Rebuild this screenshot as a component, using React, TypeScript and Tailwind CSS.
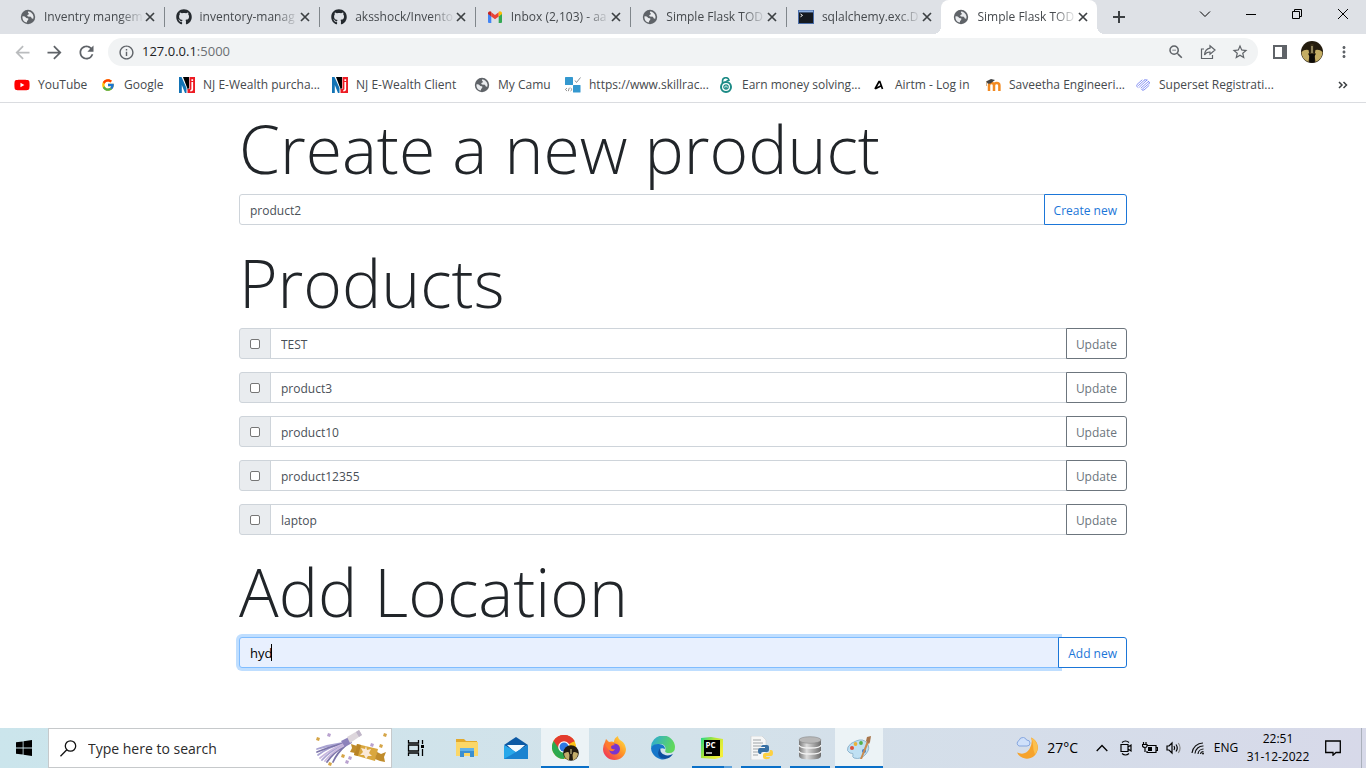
import React from "react";
import type { ReactNode } from "react";
import { FaGithub, FaYoutube } from "react-icons/fa";
import { FcGoogle } from "react-icons/fc";
import {
  MdArrowBack,
  MdArrowForward,
  MdInfoOutline,
  MdMoreVert,
  MdRefresh,
  MdStarBorder,
  MdZoomOut,
} from "react-icons/md";

/* ---------- Favicons ---------- */

const Globe = () => (
  <svg viewBox="0 0 16 16" className="size-4">
    <circle cx="8" cy="8" r="7.200" fill="#5f6368" />
    <path
      d="M2.300 7.400Q4.600 6.900 5.600 8.300q.5 1.200 2.200 1 1.100.3.300 1.600-1.400.8-1.200 2.700Q2.400 12.600 2.300 7.400zM8.600 2.300q-1.300 1-.4 1.800 1.200.2.400 1.300-1.700.2-1.300 1.500.9.900 2.600.7 1.600.1 1.700 1.700.9.700 1.800.3Q14.400 4.600 8.600 2.300z"
      fill="#e9ebee"
    />
  </svg>
);

const Gmail = () => (
  <svg viewBox="0 0 16 16" className="size-4">
    <path d="M1 4.500V13a1 1 0 0 0 1 1h2.300V7z" fill="#4285f4" />
    <path d="M15 4.500V13a1 1 0 0 1-1 1h-2.300V7z" fill="#34a853" />
    <path d="M4.300 7.400V3.200L8 6l3.700-2.800v4.200L8 10.200z" fill="#ea4335" />
    <path d="M1 4.600V4a2 2 0 0 1 3.300-1.200v4.600L1 5z" fill="#c5221f" />
    <path d="M15 4.600V4a2 2 0 0 0-3.300-1.200v4.600L15 5z" fill="#fbbc04" />
  </svg>
);

const Terminal = () => (
  <svg viewBox="0 0 16 16" className="size-4">
    <rect y="1" width="16" height="14" fill="#4a6da8" />
    <rect x="1" y="1.500" width="14" height="2" fill="#8fb0e0" />
    <rect x="1" y="3.500" width="14" height="10.500" fill="#15191f" />
    <path d="M2.500 5l2 1.400-2 1.400" stroke="#fff" fill="none" />
  </svg>
);

const Nj = () => (
  <svg viewBox="0 0 16 16" className="size-4">
    <rect width="16" height="16" fill="#fff" />
    <path d="M0 0h2.500l5 11V16H6L2.800 8v8H0z" fill="#1273b5" />
    <path d="M4 0h6v10.500L9 13z" fill="#000" />
    <path d="M10.500 0H16v16H8.500v-4h2z" fill="#ed1c24" />
    <path d="M12.400 2.200h1.700v1.700h-1.700zM12.400 5h1.700v7.500q0 1.900-2.800 1.900V13q1.100 0 1.100-1z" fill="#fff" />
  </svg>
);

const SkillRack = () => (
  <svg viewBox="0 0 16 16" className="size-4">
    <rect width="8" height="8" rx=".6" fill="#3498cf" />
    <rect x="8" y="8" width="7.500" height="7.500" rx=".6" fill="#3498cf" />
    <path d="M10 3.500l1.500 2L15.500 .5" stroke="#8a8f94" fill="none" />
    <path d="M2 11L.4 12.500 2 14M5.500 11l1.600 1.500L5.500 14M4.300 10.800l-1 3.400" stroke="#777" fill="none" strokeWidth=".8" />
  </svg>
);

const Lock = () => (
  <svg viewBox="0 0 16 16" className="size-4" fill="none" stroke="#1b8a85">
    <circle cx="8" cy="10" r="5" strokeWidth="2" />
    <circle cx="8" cy="10" r="2.200" strokeWidth="1.200" />
    <path d="M8 9.500V12M4.500 6V4a3.300 3.300 0 0 1 6.500-.8L8.500 4" strokeWidth="1.600" />
  </svg>
);

const Airtm = () => (
  <svg viewBox="0 0 16 16" className="size-4" fill="none" stroke="#000" strokeWidth="1.700">
    <path d="M4 12L8 4.500h.8l2.700 7.500M4.300 11.800L9.800 9" />
  </svg>
);

const Moodle = () => (
  <svg viewBox="0 0 16 16" className="size-4">
    <path d="M4 14V8.500Q4 6 6.500 6T9 8.500V14M9 8.500Q9 6 11.700 6t2.700 2.500V14" stroke="#f28a22" strokeWidth="2.500" fill="none" />
    <path d="M1 4.500L6 2l4 1-4.500 3.500L3 6.800z" fill="#444" />
    <path d="M1.500 4.500V9" stroke="#bb9566" strokeWidth=".7" />
  </svg>
);

const Superset = () => (
  <svg viewBox="0 0 16 16" className="size-4" fill="none" stroke="#6c7af0" strokeWidth=".8" strokeLinecap="round">
    <path d="M7 3L2 7.500a2 2 0 0 0 1 3M9.500 3L3.500 8.500M12 3L4.500 10M13.500 4.500L6 11M14.500 6L7.500 12M14 8.500L9 13a2 2 0 0 1-2.500-.5M9.500 3Q10.500 2.200 12 3M13.500 4.500q1.500.5 1 1.500" />
  </svg>
);

/* ---------- Browser frame ---------- */

type Tab = { title: string; icon: ReactNode; active?: boolean };

const tabs: Tab[] = [
  { title: "Inventry mangem", icon: <Globe /> },
  { title: "inventory-manag", icon: <FaGithub className="size-4 text-[#24292e]" /> },
  { title: "aksshock/Invento", icon: <FaGithub className="size-4 text-[#24292e]" /> },
  { title: "Inbox (2,103) - aa", icon: <Gmail /> },
  { title: "Simple Flask TOD", icon: <Globe /> },
  { title: "sqlalchemy.exc.D", icon: <Terminal /> },
  { title: "Simple Flask TOD", icon: <Globe />, active: true },
];

function TabStrip() {
  return (
    <div className="flex h-[34px] bg-[#dee1e6] pl-2 text-[#45494d]">
      <div className="flex min-w-0 flex-[0_1_1089px]">
        {tabs.map((tab, i) => (
          <div
            key={i}
            className={
              tab.active
                ? "relative flex min-w-0 flex-1 items-center rounded-t-lg bg-white pr-2 pl-3"
                : "relative flex min-w-0 flex-1 items-center pr-2 pl-3"
            }
          >
            {tab.active && (
              <>
                <span className="absolute bottom-0 -left-2 size-2 bg-[radial-gradient(circle_at_0_0,transparent_8px,white_8px)]" />
                <span className="absolute -right-2 bottom-0 size-2 bg-[radial-gradient(circle_at_100%_0,transparent_8px,white_8px)]" />
              </>
            )}
            <span className="flex w-4 shrink-0 justify-center">{tab.icon}</span>
            <a
              href="#"
              className="ml-2 min-w-0 flex-1 whitespace-nowrap [mask-image:linear-gradient(to_right,black_76%,transparent)]"
            >
              {tab.title}
            </a>
            <button aria-label="Close tab" className="flex w-3 shrink-0 items-center justify-center">
              <svg viewBox="0 0 10 10" className="size-[10px]">
                <path d="M1 1l8 8M9 1L1 9" stroke="#3c4043" strokeWidth="1.700" />
              </svg>
            </button>
            {i < 5 && <span className="absolute top-[7px] -right-px h-5 w-px bg-[#80868b]" />}
          </div>
        ))}
      </div>
      <button aria-label="New tab" className="ml-3 flex w-5 shrink-0 items-center justify-center">
        <svg viewBox="0 0 12 12" className="size-3">
          <path d="M6 0v12M0 6h12" stroke="#3c4043" strokeWidth="2" />
        </svg>
      </button>
      <div className="ml-auto flex h-7 shrink-0 text-black">
        {[
          ["Search tabs", "M1 3.500l5 5 5-5"],
          ["Minimize", "M1 6.500h10"],
          ["Restore", "M1.500 3.500h7v7h-7zM3.500 3.500v-2h7v7h-2"],
          ["Close", "M1 1l10 10M11 1L1 11"],
        ].map(([label, d]) => (
          <button key={label} aria-label={label} className="flex w-[46px] items-center justify-center">
            <svg viewBox="0 0 12 12" className="size-3" fill="none" stroke="currentColor">
              <path d={d} />
            </svg>
          </button>
        ))}
      </div>
    </div>
  );
}

const slot = "flex w-8 shrink-0 items-center justify-center";

function Toolbar() {
  return (
    <div className="flex h-9 items-center bg-white px-[6px] text-[#5f6368]">
      <button aria-label="Back" className={slot}>
        <MdArrowBack className="size-[21px] text-[#babcbe]" />
      </button>
      <button aria-label="Forward" className={slot}>
        <MdArrowForward className="size-[21px]" />
      </button>
      <button aria-label="Reload" className={slot}>
        <MdRefresh className="size-[21px]" />
      </button>
      <div className="ml-[6px] flex h-7 min-w-0 flex-1 items-center rounded-full bg-[#f1f3f4] px-[2px]">
        <button aria-label="View site information" className={slot}>
          <MdInfoOutline className="size-[17px]" />
        </button>
        <div role="textbox" aria-label="Address" className="flex-1 text-[13px] text-[#6b6f73]">
          <span className="text-[#202124]">127.0.0.1</span>:5000
        </div>
        <button aria-label="Zoom" className={slot}>
          <MdZoomOut className="size-[18px]" />
        </button>
        <button aria-label="Share" className={slot}>
          <svg viewBox="0 0 16 16" className="size-4" fill="none" stroke="currentColor" strokeWidth="1.200">
            <path d="M4 5H1.500v9.500h11V11" />
            <path d="M10 1.800l5 4.200-5 4.200V8Q6.500 7.800 4.500 11 5 5 10 4.200z" />
          </svg>
        </button>
        <button aria-label="Bookmark" className={slot}>
          <MdStarBorder className="size-[18px]" />
        </button>
      </div>
      <button aria-label="Side panel" className="ml-[6px] flex w-8 shrink-0 items-center justify-center">
        <svg viewBox="0 0 14 14" className="size-[14px]">
          <path d="M1 1h12v12H1z" fill="none" stroke="currentColor" strokeWidth="2" />
          <path d="M9 1h4v12H9z" fill="currentColor" />
        </svg>
      </button>
      <button aria-label="Profile" className={slot}>
        <svg viewBox="0 0 22 22" className="size-[22px]">
          <circle cx="11" cy="11" r="11" fill="#241c0e" />
          <path d="M.5 11q3-3 7-2l1 5-1 7A11 11 0 0 1 .5 11zM21.500 11q-3-3-7-2l-1 5 1 7a11 11 0 0 0 7-10z" fill="#c4ad63" />
          <path d="M7 12.500h8l-1.500 3v6h-5v-6z" fill="#0b0906" />
          <path d="M9.500 3h3v7l1 3h-5l1-3z" fill="#3a2f18" />
          <path d="M10.500 5h1v7h-1z" fill="#e6d9a0" />
        </svg>
      </button>
      <button aria-label="Menu" className={slot}>
        <MdMoreVert className="size-[18px]" />
      </button>
    </div>
  );
}

const bookmarks: { label: string; icon: ReactNode; width: string }[] = [
  { label: "YouTube", icon: <FaYoutube className="size-4 text-[#f00]" />, width: "w-[86px]" },
  { label: "Google", icon: <FcGoogle className="size-[14px]" />, width: "w-[79px]" },
  { label: "NJ E-Wealth purcha...", icon: <Nj />, width: "w-[153px]" },
  { label: "NJ E-Wealth Client", icon: <Nj />, width: "w-[142px]" },
  { label: "My Camu", icon: <Globe />, width: "w-[91px]" },
  { label: "https://www.skillrac...", icon: <SkillRack />, width: "w-[153px]" },
  { label: "Earn money solving...", icon: <Lock />, width: "w-[153px]" },
  { label: "Airtm - Log in", icon: <Airtm />, width: "w-[114px]" },
  { label: "Saveetha Engineeri...", icon: <Moodle />, width: "w-[150px]" },
  { label: "Superset Registrati...", icon: <Superset />, width: "w-[140px]" },
];

function BookmarksBar() {
  return (
    <nav className="flex h-[33px] items-center border-b border-[#dadce0] bg-white pr-[18px] pb-[3px] pl-[14px] text-[#45494d]">
      {bookmarks.map((b) => (
        <a key={b.label} href="#" className={`${b.width} flex items-center gap-2 whitespace-nowrap`}>
          <span className="flex w-4 shrink-0 justify-center">{b.icon}</span>
          {b.label}
        </a>
      ))}
      <button aria-label="More bookmarks" className="ml-auto">
        <svg viewBox="0 0 10 8" className="h-2 w-[10px]" fill="none" stroke="#3c4043" strokeWidth="1.500">
          <path d="M1 1l3 3-3 3M5.500 1l3 3-3 3" />
        </svg>
      </button>
    </nav>
  );
}

/* ---------- Page ---------- */

const heading = "mb-[2px] text-[66px] leading-[88px] font-light whitespace-nowrap text-[#212529]";
const field = "min-w-0 flex-1 border border-[#ced4da] bg-white px-[10px] pt-[2px] text-[#495057] outline-none";
const action = "-ml-px rounded-r-[3px] border bg-white px-[9px] pt-[2px]";

function ProductRow({ name }: { name: string }) {
  return (
    <form className="flex h-[31px]" onSubmit={(e) => e.preventDefault()}>
      <label className="flex w-8 shrink-0 items-center justify-center rounded-l-[3px] border border-[#ced4da] bg-[#e9ecef]">
        <input
          type="checkbox"
          aria-label={`Select ${name}`}
          className="size-[10px] appearance-none rounded-[2px] border border-[#767676] bg-white checked:bg-[#1b76d8]"
        />
      </label>
      <input type="text" aria-label="Product name" defaultValue={name} className={`${field} -ml-px`} />
      <button type="submit" className={`${action} border-[#6c757d] text-[#6c757d]`}>
        Update
      </button>
    </form>
  );
}

function InventoryPage() {
  return (
    <main className="flex-1 bg-white px-4 pt-px">
      <div className="mx-auto max-w-[888px]">
        <h1 className={heading}>Create a new product</h1>
        <form className="mb-[13px] flex h-[31px]" onSubmit={(e) => e.preventDefault()}>
          <input type="text" aria-label="New product" defaultValue="product2" className={`${field} rounded-l-[3px]`} />
          <button type="submit" className={`${action} border-[#1b76d8] text-[#1b76d8]`}>
            Create new
          </button>
        </form>

        <h1 className={heading}>Products</h1>
        <div className="mb-3 flex flex-col gap-[13px]">
          {["TEST", "product3", "product10", "product12355", "laptop"].map((name) => (
            <ProductRow key={name} name={name} />
          ))}
        </div>

        <h1 className={heading}>Add Location</h1>
        <form className="flex h-[31px]" onSubmit={(e) => e.preventDefault()}>
          <div className="relative flex min-w-0 flex-1">
            <input
              type="text"
              aria-label="New location"
              defaultValue="hyd"
              className="min-w-0 flex-1 rounded-l-[3px] border border-[#80bdff] bg-[#e8f0fe] px-[10px] pt-[2px] text-[13px] text-black caret-transparent shadow-[0_0_0_3px_#bfdeff] outline-none"
            />
            <span className="absolute top-[7px] left-8 h-[17px] w-px bg-black" />
          </div>
          <button type="submit" className={`${action} relative border-[#1b76d8] text-[#1b76d8]`}>
            Add new
          </button>
        </form>
      </div>
    </main>
  );
}

/* ---------- Taskbar ---------- */

const Confetti = () => (
  <svg viewBox="0 0 76 38" className="h-[38px] w-[76px] shrink-0">
    <g fill="none" strokeLinecap="round" strokeWidth="1.800">
      <path d="M28 14Q14 16 2 20M28 14Q12 19 3 26M29 15Q15 22 7 31" stroke="#a9a3d2" />
      <path d="M29 14Q14 18 2 23M30 16Q18 24 12 33M31 16Q22 24 18 33" stroke="#7b74a8" />
      <path d="M28 15Q16 20 5 29M30 16Q18 22 10 32" stroke="#c9b8dd" />
    </g>
    <path d="M26 12l8-4 3 6-7 4z" fill="#8d82bb" />
    <path d="M32 8L44 1l3 5-12 8z" fill="#ddd6dc" />
    <path d="M41 3l3-2 3 5-3 2z" fill="#c0b6c9" />
    <path d="M42 15l21 5-3 12-21-6z" fill="#d9a73e" />
    <path d="M42 15l4 1-3 11-4-1z" fill="#b98425" />
    <path d="M42 17l-6-2 1 4-2 4 5 1zM62 23l4 2 5-2-2 5 1 5-5-1-5-2z" fill="#c08c2b" />
    <path d="M51 17l1 4 4-1-2 4 3 3-4 0-2 3-2-4-4 0 3-3-2-4 4 1z" fill="#fbe9d8" />
    <g fill="#d5a547">
      <path d="M2 8l3 1-1 3-3-1zM69 4l3 1-1 3-3-1zM65 15l3 1-1 3-3-1zM14 33l3 1-1 3-3-1zM27 25l3 1-1 3-3-1z" />
    </g>
    <g fill="#b9a2cf">
      <path d="M13 4l3 1-1 3-3-1zM56 14l3 1-1 3-3-1zM34 27l3 1-1 3-3-1zM31 31l3 1-1 3-3-1z" />
    </g>
  </svg>
);

const TaskView = () => (
  <svg viewBox="0 0 18 16" className="h-4 w-[18px]" fill="none" stroke="#000" strokeWidth="1.300">
    <path d="M1.500 0v3h10V0M1.500 16v-3h10v3M1.500 5h10v6h-10zM15.500 0v4M15.500 9v7" />
    <path d="M14 5h3v3h-3z" fill="#000" stroke="none" />
  </svg>
);

const Folder = () => (
  <svg viewBox="0 0 24 24" className="size-6">
    <path d="M1 3h8l2 2h11v15H1z" fill="#e3a92b" />
    <path d="M1 6h22v14H1z" fill="#fbd768" />
    <path d="M5 12h14v9h-4v-4H9v4H5z" fill="#3b8fd0" />
    <path d="M5 12h14v3H5z" fill="#62b2e8" />
  </svg>
);

const Mail = () => (
  <svg viewBox="0 0 24 24" className="size-6">
    <path d="M0 9L12 1l12 8-12 8z" fill="#0c59a4" />
    <path d="M3 9h18l-9 8z" fill="#f4fafe" />
    <path d="M0 9l12 7 12-7v14H0z" fill="#28a8ea" />
    <path d="M0 23L24 9v14z" fill="#1a83d0" />
  </svg>
);

const Chrome = () => (
  <svg viewBox="0 0 27 26" className="h-[26px] w-[27px]">
    <circle cx="12" cy="12" r="12" fill="#fbc116" />
    <path d="M12 12L1.600 6A12 12 0 0 1 22.400 6z" fill="#e33b2e" />
    <path d="M1.600 6A12 12 0 0 0 12 24l5-9-5-3z" fill="#2da94f" />
    <path d="M12 6.500h10.700L22.400 6A12 12 0 0 0 1.600 6l5.600 8z" fill="#e33b2e" />
    <circle cx="12" cy="12" r="5.800" fill="#fff" />
    <circle cx="12" cy="12" r="4.500" fill="#2f78e4" />
    <circle cx="19" cy="18" r="7.800" fill="#211a10" />
    <path d="M12 18.500q2-2 4.500-1.500l1 3-.5 5.300a7.800 7.800 0 0 1-5-6.800zM26 18.500q-2-2-4.500-1.500l-1 3 .5 5.300a7.800 7.800 0 0 0 5-6.800z" fill="#c3ad6b" />
    <path d="M18.500 14h1v5h-1z" fill="#e6d9a0" />
  </svg>
);

const Firefox = () => (
  <svg viewBox="0 0 24 24" className="size-6">
    <defs>
      <linearGradient id="fx" x1="1" y1="0" x2="0" y2="1">
        <stop offset="0" stopColor="#fff04a" />
        <stop offset=".45" stopColor="#ff9326" />
        <stop offset="1" stopColor="#ed1c64" />
      </linearGradient>
    </defs>
    <path d="M3 6l1-3 3 3q3-1 5 0 0-4 4-6 0 3 3.500 5T24 13a11.500 11 0 0 1-23 0Q1 9 3 6z" fill="url(#fx)" />
    <circle cx="12.500" cy="13" r="5.500" fill="#7a35cf" />
    <path d="M3 8q6-3 10 1-4 0-4 2 0 3 4 2-2 4-6 1-3-3-4-6z" fill="#ff7a2d" />
  </svg>
);

const Edge = () => (
  <svg viewBox="0 0 24 24" className="size-6">
    <defs>
      <linearGradient id="edgeTop" x1="0" y1="0" x2="1" y2=".3">
        <stop offset="0" stopColor="#2aa7dc" />
        <stop offset="1" stopColor="#5fd85c" />
      </linearGradient>
    </defs>
    <path d="M0 12A12 12 0 0 1 24 11q0 6-6 6-5 0-3.500-3Q15 8 9 8 3 8 0 12z" fill="url(#edgeTop)" />
    <path d="M0 12Q2 7.500 8 8q6 .5 6 5-4-2-6 1-1 8 7 9A12 12 0 0 1 0 12z" fill="#1676c9" />
    <path d="M8.500 12.500Q5 19 10 22q7 3 12-4-5 2.500-9 .500t-3.500-5z" fill="#0c4f9f" />
  </svg>
);

const PyCharm = () => (
  <svg viewBox="0 0 22 22" className="size-[22px]">
    <defs>
      <linearGradient id="pc" x1="0" y1="0" x2="1" y2=".6">
        <stop offset="0" stopColor="#21d789" />
        <stop offset=".5" stopColor="#b5e636" />
        <stop offset="1" stopColor="#f3ef3a" />
      </linearGradient>
    </defs>
    <path d="M0 1l10-1 12 2v18l-8 2-14-1z" fill="url(#pc)" />
    <rect x="3" y="3" width="16" height="16" fill="#000" />
    <text x="4.500" y="11" fontSize="8" fontWeight="700" fill="#fff">PC</text>
    <path d="M5 16h6" stroke="#fff" strokeWidth="1.300" />
  </svg>
);

const PythonFile = () => (
  <svg viewBox="0 0 24 24" className="size-6">
    <path d="M2 0h11l4 4v20H2z" fill="#f6f7f7" stroke="#c8cbcd" strokeWidth=".6" />
    <path d="M4 4h8M4 7h10M4 10h8M4 13h6M4 16h6M4 19h5" stroke="#9ea3a6" />
    <path d="M14 9h4q2 0 2 2v3q0 2-2 2h-4q-2 0-2 2h-1q-2 0-2-3t2-3h5v-1h-4q0-2 2-2z" fill="#3770a4" />
    <path d="M19 23h-3q-2 0-2-2v-2q0-2 2-2h3q2 0 2-3h1q2 0 2 3t-2 3h-5v1h4q0 2-2 2z" fill="#fdd143" />
  </svg>
);

const Database = () => (
  <svg viewBox="0 0 24 24" className="size-6">
    <defs>
      <linearGradient id="db">
        <stop offset="0" stopColor="#777" />
        <stop offset=".35" stopColor="#ddd" />
        <stop offset="1" stopColor="#6c6c6c" />
      </linearGradient>
    </defs>
    <path d="M1 4v16q0 3.500 11 3.500T23 20V4z" fill="url(#db)" />
    <path d="M1 9q0 3 11 3t11-3M1 15q0 3 11 3t11-3" stroke="#f3f3f3" strokeWidth="1.300" fill="none" />
    <ellipse cx="12" cy="4" rx="11" ry="3.300" fill="#b7b7b7" stroke="#888" strokeWidth=".6" />
  </svg>
);

const Paint = () => (
  <svg viewBox="0 0 24 24" className="size-6">
    <path d="M9 5q7-3 11 2t-1 11-12 4q-2-1-1-3t-3-2Q-1 15 1 11q2-4 8-6z" fill="#bfe0f3" stroke="#7fa8c4" strokeWidth=".8" />
    <circle cx="5" cy="12" r="2" fill="#e0503c" />
    <circle cx="8.500" cy="8" r="1.900" fill="#e9b23a" />
    <circle cx="14" cy="7" r="1.900" fill="#54b04c" />
    <circle cx="17" cy="15" r="2" fill="#3c78c8" />
    <path d="M13 23L20 5l2 1-7 17z" fill="#c98b4f" />
    <path d="M19 5l1-4 4-1-1 6-1 2z" fill="#a8764c" />
  </svg>
);

const apps: { name: string; icon: ReactNode; state: "idle" | "open" | "stacked" | "current" }[] = [
  { name: "File Explorer", icon: <Folder />, state: "idle" },
  { name: "Mail", icon: <Mail />, state: "idle" },
  { name: "Chrome", icon: <Chrome />, state: "current" },
  { name: "Firefox", icon: <Firefox />, state: "idle" },
  { name: "Edge", icon: <Edge />, state: "idle" },
  { name: "PyCharm", icon: <PyCharm />, state: "stacked" },
  { name: "Python", icon: <PythonFile />, state: "open" },
  { name: "Database", icon: <Database />, state: "open" },
  { name: "Paint", icon: <Paint />, state: "current" },
];

const Moon = () => (
  <svg viewBox="0 0 24 24" className="size-6">
    <path d="M16 1.500A11 11 0 1 1 2 16.500Q10 20 14.500 13 18 7 16 1.500z" fill="#f6a32c" />
    <path d="M16 1.500a11 11 0 0 1 4 17Q18 14 18 9q0-4-2-7.500z" fill="#fbc04f" />
    <path d="M4 10a3 3 0 0 1 0-5.500Q5 1 8.500 1.500 11 2 11.500 4 15 4 15 7t-3 3z" fill="#cfe0fa" stroke="#7d9fdc" strokeWidth=".9" />
  </svg>
);

const tray = "flex w-6 shrink-0 items-center justify-center";

function Taskbar() {
  return (
    <footer className="flex h-10 bg-linear-to-r from-[#cbe5ec] via-[#d3e2ea] to-[#d7d9e9] text-black">
      <button aria-label="Start" className="flex w-12 shrink-0 items-center justify-center">
        <svg viewBox="0 0 16 16" className="size-4">
          <path d="M0 2.300L6.700 1.400V7.600H0zM7.500 1.300L16 0v7.600H7.500zM0 8.400h6.700v6.200L0 13.700zM7.500 8.400H16V16l-8.500-1.300z" />
        </svg>
      </button>
      <label className="flex w-[344px] shrink-0 items-center border border-[#c6c9cb] bg-white pl-[11px]">
        <svg viewBox="0 0 17 17" className="size-[17px] shrink-0" fill="none" stroke="#111" strokeWidth="1.300">
          <circle cx="10.500" cy="6" r="5.200" />
          <path d="M6.800 9.800L.5 16.300" />
        </svg>
        <input
          type="text"
          aria-label="Search"
          placeholder="Type here to search"
          className="ml-[11px] min-w-0 flex-1 pt-[2px] text-sm outline-none placeholder:text-[#2b2b2b]"
        />
        <Confetti />
      </label>
      <button aria-label="Task view" className="mr-[3px] flex w-12 shrink-0 items-center justify-center">
        <TaskView />
      </button>
      <div className="flex gap-px">
        {apps.map((app) => (
          <button
            key={app.name}
            aria-label={app.name}
            className={
              app.state === "current"
                ? "relative flex w-12 items-center justify-center bg-[#ecf3f6]"
                : "relative flex w-12 items-center justify-center"
            }
          >
            {app.icon}
            {app.state === "current" && <span className="absolute inset-x-0 bottom-0 h-[2px] bg-[#0a70c8]" />}
            {app.state === "open" && <span className="absolute inset-x-1 bottom-0 h-[2px] bg-[#0a70c8]" />}
            {app.state === "stacked" && (
              <span className="absolute inset-x-1 bottom-0 h-[2px] border-r-8 border-[#5fa3dc] bg-[#0a70c8]" />
            )}
          </button>
        ))}
      </div>

      <div className="ml-auto flex shrink-0 items-center">
        <button className="mr-3 flex items-center gap-2 text-sm">
          <Moon />
          27°C
        </button>
        <button aria-label="Hidden icons" className={tray}>
          <svg viewBox="0 0 12 8" className="h-2 w-3" fill="none" stroke="#000" strokeWidth="1.300">
            <path d="M.7 7L6 1.500 11.300 7" />
          </svg>
        </button>
        <button aria-label="Meet now" className={tray}>
          <svg viewBox="0 0 12 16" className="h-4 w-3" fill="none" stroke="#000" strokeWidth="1.200">
            <path d="M2 2.500Q5.500-.5 9 2.500M2 13.500q3.500 3 7 0M1 4.500h7v7H1zM8 7l3-2v6L8 9" />
          </svg>
        </button>
        <button aria-label="Battery" className={tray}>
          <svg viewBox="0 0 16 12" className="h-3 w-4" fill="none" stroke="#000" strokeWidth="1.200">
            <path d="M5.500 3.500H14v7H5V9M14 5.500h1.500v3H14M1.500 0v2.500M4 0v2.500M.5 2.500H5V4Q5 5.500 3 5.500T.5 4zM3 5.500V10" />
            <path d="M6 5h4v4H6z" fill="#000" stroke="none" />
          </svg>
        </button>
        <button aria-label="Volume" className={tray}>
          <svg viewBox="0 0 16 14" className="h-[14px] w-4" fill="none" stroke="#000" strokeWidth="1.200">
            <path d="M1 5h2l3-3v10L3 9H1zM8 5q1.300 2 0 4M10 3.500q2.500 3.500 0 7" />
            <path d="M12.300 2q3.500 5 0 10" stroke="#888" />
          </svg>
        </button>
        <button aria-label="Network" className={tray}>
          <svg viewBox="0 0 14 14" className="size-[14px]" fill="none" stroke="#111" strokeWidth="1.200">
            <path d="M1 12A11 11 0 0 1 12 2M4 12.500A8 8 0 0 1 12.500 5M7 13a5.500 5.500 0 0 1 5.500-5M9.500 13a3 3 0 0 1 3-2.500" />
            <circle cx="12" cy="12.500" r="1" fill="#111" stroke="none" />
          </svg>
        </button>
        <button aria-label="Input language" className="w-8 text-center">ENG</button>
        <button className="w-[72px] text-center leading-[18px] whitespace-nowrap">
          22:51
          <br />
          31-12-2022
        </button>
        <button aria-label="Notifications" className="ml-[6px] flex w-[26px] items-center justify-center">
          <svg viewBox="0 0 16 16" className="size-4" fill="none" stroke="#000" strokeWidth="1.300">
            <path d="M.7 1h14.600v11.500h-4.300L8 15.200V12.500H.7z" />
          </svg>
        </button>
        <span className="mr-1 ml-[15px] h-10 w-px bg-[#aab0bb]" />
      </div>
    </footer>
  );
}

export default function App() {
  return (
    <div className="flex min-h-screen flex-col bg-white font-['Open_Sans','Noto_Sans',sans-serif] text-xs">
      <header>
        <TabStrip />
        <Toolbar />
        <BookmarksBar />
      </header>
      <InventoryPage />
      <Taskbar />
    </div>
  );
}
